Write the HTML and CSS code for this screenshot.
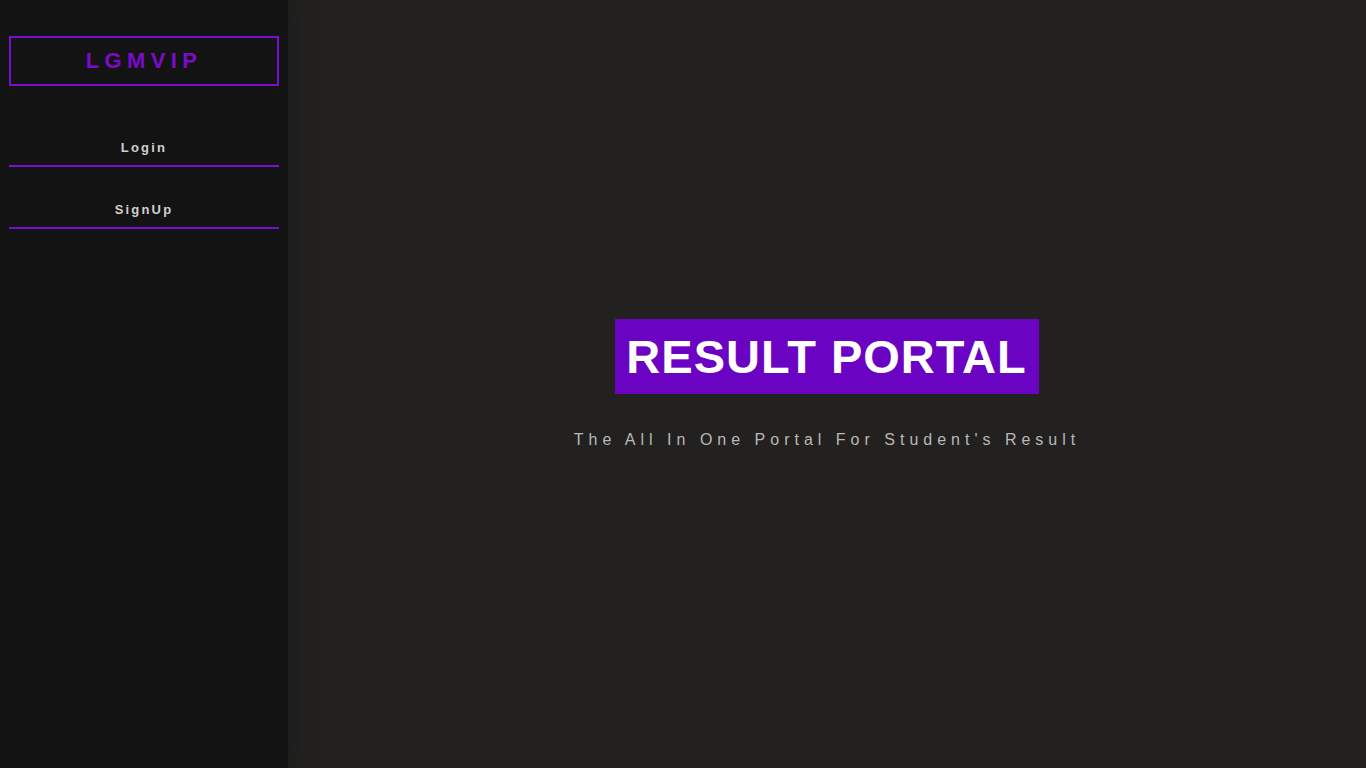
FILE: index.html
```html
<!DOCTYPE html>
<html>
<head>
<meta charset="utf-8">
<link rel="stylesheet" href="styles.css">
</head>
<body>
<div class="layout">
  <aside class="sidebar">
    <div class="logo">LGMVIP</div>
    <nav class="nav">
      <a class="nav-link" href="#">Login</a>
      <a class="nav-link" href="#">SignUp</a>
    </nav>
  </aside>
  <main class="main">
    <h1 class="title">RESULT PORTAL</h1>
    <p class="subtitle">The All In One Portal For Student's Result</p>
  </main>
</div>
</body>
</html>
```
FILE: styles.css
```css
* { box-sizing: border-box; }
html, body { margin: 0; padding: 0; height: 100%; }
body {
  font-family: "Liberation Sans", Arial, sans-serif;
  background: #222120;
}
.layout {
  display: flex;
  height: 768px;
}
.sidebar {
  width: 288px;
  flex: none;
  background: #141313;
  padding: 36px 9px 0 9px;
  box-shadow: 0 0 20px 4px rgba(28,28,28,0.9);
  position: relative;
  z-index: 1;
}
.logo {
  height: 50px;
  border: 2px solid #7a0fd0;
  color: #7a0bc8;
  font-weight: bold;
  font-size: 22px;
  letter-spacing: 5.4px;
  display: flex;
  align-items: center;
  justify-content: center;
}
.nav {
  display: flex;
  flex-direction: column;
  margin-top: 54px;
  gap: 35px;
}
.nav-link {
  display: block;
  text-align: center;
  color: #cfcfcf;
  font-weight: bold;
  font-size: 13px;
  letter-spacing: 2.2px;
  text-decoration: none;
  padding-bottom: 10px;
  border-bottom: 2px solid #7a0fd0;
  line-height: 15px;
}
.main {
  flex: 1;
  display: flex;
  flex-direction: column;
  align-items: center;
  padding-top: 319px;
  background: #222120;
}
.title {
  margin: 0;
  background: #6a03c2;
  color: #ffffff;
  font-size: 47px;
  font-weight: bold;
  letter-spacing: 1px;
  height: 75px;
  line-height: 75px;
  padding: 0 12px 0 11px;
}
.subtitle {
  margin: 36px 0 0 0;
  color: #b8b8b8;
  font-size: 16px;
  letter-spacing: 5px;
  line-height: 20px;
}
```
